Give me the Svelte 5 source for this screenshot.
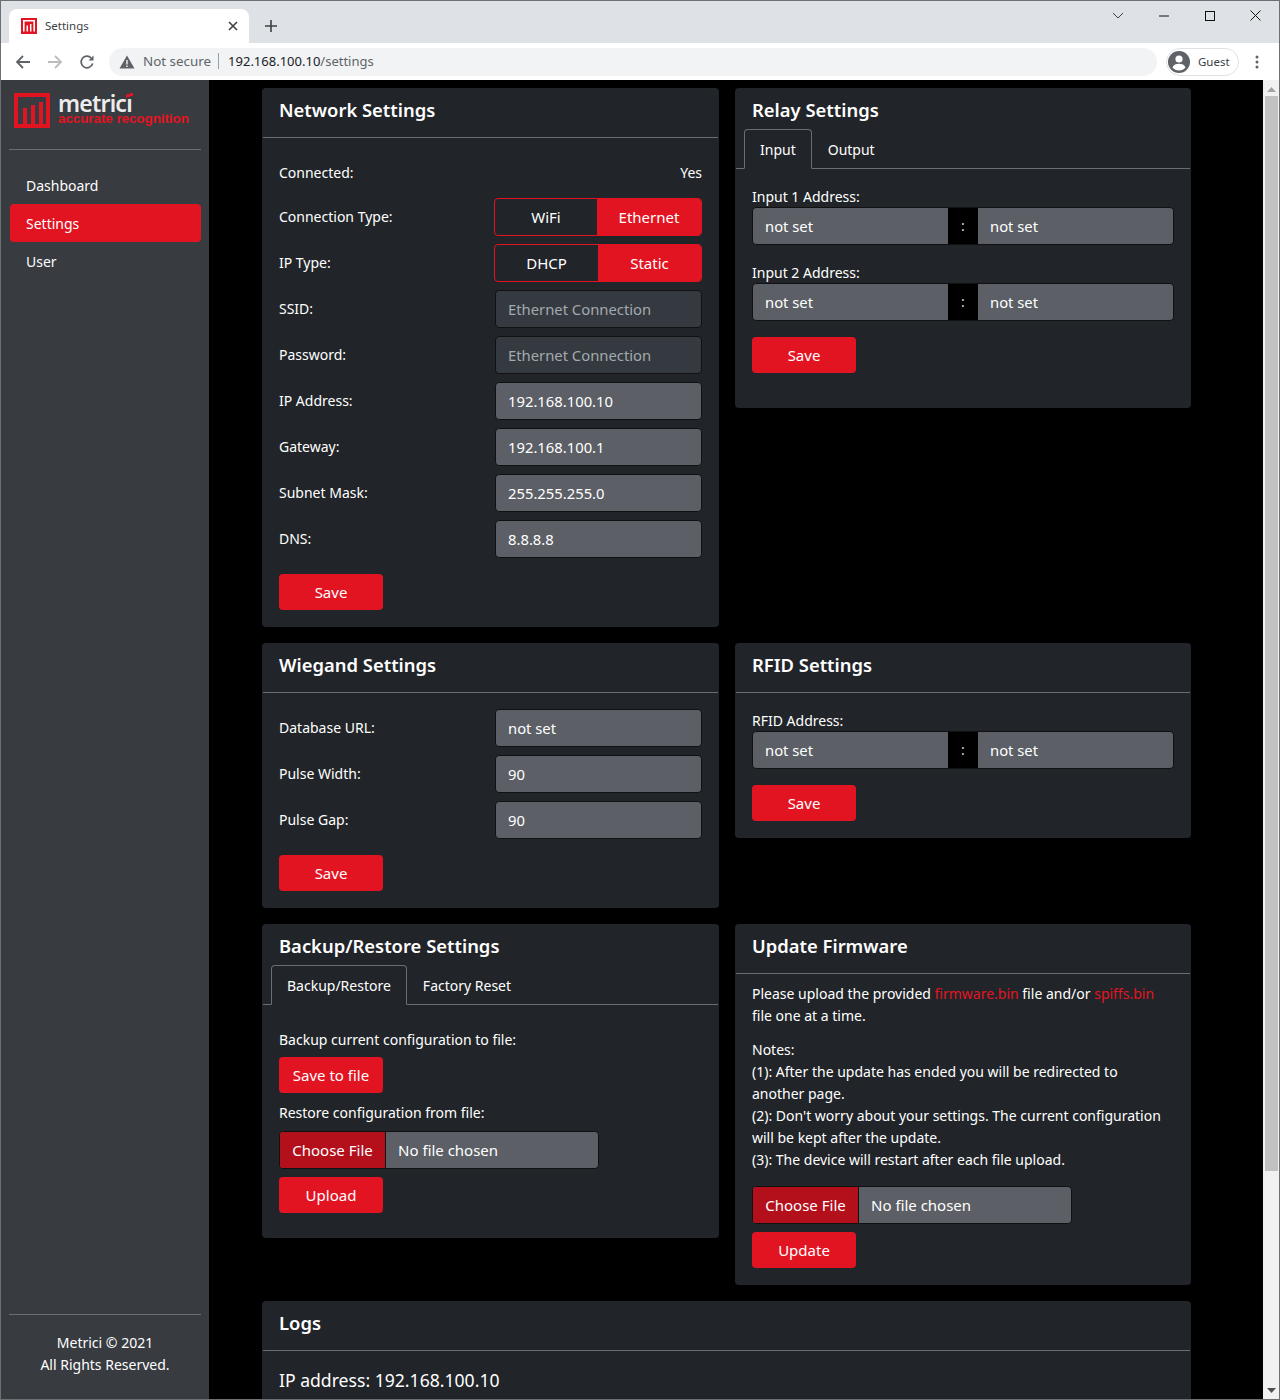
<script>
  const networkInputs = [
    { label: 'SSID:', value: 'Ethernet Connection', disabled: true },
    { label: 'Password:', value: 'Ethernet Connection', disabled: true },
    { label: 'IP Address:', value: '192.168.100.10' },
    { label: 'Gateway:', value: '192.168.100.1' },
    { label: 'Subnet Mask:', value: '255.255.255.0' },
    { label: 'DNS:', value: '8.8.8.8' }
  ];
  const wiegandInputs = [
    { label: 'Database URL:', value: 'not set' },
    { label: 'Pulse Width:', value: '90' },
    { label: 'Pulse Gap:', value: '90' }
  ];
</script>

{#snippet toggle(a, b)}
  <div class="toggle">
    <button class="tg">{a}</button>
    <button class="tg on">{b}</button>
  </div>
{/snippet}

{#snippet pair(label)}
  <div class="lbl pl">{label}</div>
  <div class="pair">
    <input class="pair-in" value="not set" />
    <span class="colon">:</span>
    <input class="pair-in" value="not set" />
  </div>
{/snippet}

{#snippet filepick()}
  <div class="file">
    <span class="file-btn">Choose File</span>
    <span class="file-name">No file chosen</span>
  </div>
{/snippet}

<div class="window">
  <header class="browser">
    <div class="tabstrip">
      <div class="btab">
        <svg class="favicon" width="16" height="16" viewBox="0 0 16 16">
          <rect width="16" height="16" fill="#e31422" />
          <path d="M2.800 13.500V2.800h10.400v10.700" fill="none" stroke="#fff" stroke-width="1.600" />
          <path d="M6.300 13.500V7.500M9.700 13.500V6" fill="none" stroke="#fff" stroke-width="1.500" />
        </svg>
        <span class="btab-title">Settings</span>
        <svg class="btab-x" width="10" height="10" viewBox="0 0 10 10"><path d="M1 1l8 8M9 1l-8 8" stroke="#3c4043" stroke-width="1.600" /></svg>
      </div>
      <svg class="newtab" width="12" height="12" viewBox="0 0 12 12"><path d="M6 0v12M0 6h12" stroke="#3c4043" stroke-width="1.600" /></svg>
      <div class="winctl">
        <svg class="w-chev" width="12" height="7" viewBox="0 0 12 7"><path d="M1 1l5 5 5-5" fill="none" stroke="#3c4043" /></svg>
        <svg class="w-min" width="10" height="2" viewBox="0 0 10 2"><path d="M0 1h10" stroke="#111" /></svg>
        <svg class="w-max" width="10" height="10" viewBox="0 0 10 10"><rect x=".5" y=".5" width="9" height="9" fill="none" stroke="#111" /></svg>
        <svg class="w-close" width="11" height="11" viewBox="0 0 11 11"><path d="M.5.5l10 10M10.500.5l-10 10" stroke="#111" /></svg>
      </div>
    </div>
    <div class="toolbar">
      <svg class="nav-ic" width="16" height="16" viewBox="0 0 16 16"><path d="M15 8H2M8 2L2 8l6 6" fill="none" stroke="#5f6368" stroke-width="1.800" /></svg>
      <svg class="nav-ic" width="16" height="16" viewBox="0 0 16 16"><path d="M1 8h13M8 2l6 6-6 6" fill="none" stroke="#babcbe" stroke-width="1.800" /></svg>
      <svg class="nav-ic" width="16" height="16" viewBox="0 0 16 16"><path d="M13.600 9.500A5.800 5.800 0 1 1 12.200 4" fill="none" stroke="#5f6368" stroke-width="1.700" /><path d="M14.500 1.500v5h-5z" fill="#5f6368" /></svg>
      <div class="omni">
        <svg width="16" height="14" viewBox="0 0 16 14"><path d="M8 .5L15.500 13.500H.5z" fill="#5f6368" /><path d="M8 5v4.500M8 10.500v1.500" stroke="#f1f3f4" stroke-width="1.400" /></svg>
        <span class="notsec">Not secure</span>
        <span class="omni-sep"></span>
        <span class="url">192.168.100.10<span class="url-path">/settings</span></span>
      </div>
      <div class="guest">
        <svg width="22" height="22" viewBox="0 0 22 22"><circle cx="11" cy="11" r="11" fill="#5f6368" /><circle cx="11" cy="8" r="3.600" fill="#fff" /><path d="M4.500 16.500c1-2.800 3.600-3.800 6.500-3.800s5.500 1 6.500 3.800c-1.500 1.800-3.900 3-6.500 3s-5-1.200-6.500-3z" fill="#fff" /></svg>
        <span>Guest</span>
      </div>
      <svg class="kebab" width="4" height="14" viewBox="0 0 4 14"><circle cx="2" cy="2" r="1.500" fill="#5f6368" /><circle cx="2" cy="7" r="1.500" fill="#5f6368" /><circle cx="2" cy="12" r="1.500" fill="#5f6368" /></svg>
    </div>
  </header>

  <div class="page">
    <aside class="sidebar">
      <div class="brand">
        <svg class="brand-mark" width="36" height="35" viewBox="0 0 36 35">
          <path d="M2 35V2h32v33" fill="none" stroke="#e31422" stroke-width="4" />
          <path d="M0 31h36v4H0zM9 31V15h4v16zM17 31V12h4v19zM25 31V9h4v22z" fill="#e31422" />
        </svg>
        <div class="brand-text">
          <div class="brand-name">metric<span class="tick">i</span></div>
          <div class="brand-tag">accurate recognition</div>
        </div>
      </div>
      <hr class="side-rule" />
      <nav class="side-nav">
        <a class="side-link" href="#d">Dashboard</a>
        <a class="side-link active" href="#s">Settings</a>
        <a class="side-link" href="#u">User</a>
      </nav>
      <div class="side-foot">
        <hr class="side-rule" />
        <p>Metrici © 2021<br />All Rights Reserved.</p>
      </div>
    </aside>

    <main class="main">
      <div class="grid">
        <section class="card">
          <div class="head"><h5>Network Settings</h5></div>
          <div class="body">
            <div class="row plain"><span>Connected:</span><span class="yes">Yes</span></div>
            <div class="row"><span class="rl">Connection Type:</span>{@render toggle('WiFi', 'Ethernet')}</div>
            <div class="row"><span class="rl">IP Type:</span><div class="alt">{@render toggle('DHCP', 'Static')}</div></div>
            {#each networkInputs as f}
              <div class="row"><span class="rl">{f.label}</span><input class="in" class:dis={f.disabled} value={f.value} /></div>
            {/each}
            <button class="btn top8">Save</button>
          </div>
        </section>

        <section class="card">
          <div class="head tabbed">
            <h5>Relay Settings</h5>
            <div class="tabs"><span class="t active">Input</span><span class="t">Output</span></div>
          </div>
          <div class="body compact">
            {@render pair('Input 1 Address:')}
            <div class="gap8"></div>
            {@render pair('Input 2 Address:')}
            <button class="btn top16">Save</button>
          </div>
        </section>

        <section class="card">
          <div class="head"><h5>Wiegand Settings</h5></div>
          <div class="body">
            {#each wiegandInputs as f}
              <div class="row"><span class="rl">{f.label}</span><input class="in" value={f.value} /></div>
            {/each}
            <button class="btn top8">Save</button>
          </div>
        </section>

        <section class="card">
          <div class="head"><h5>RFID Settings</h5></div>
          <div class="body">
            {@render pair('RFID Address:')}
            <button class="btn top16">Save</button>
          </div>
        </section>

        <section class="card">
          <div class="head tabbed">
            <h5>Backup/Restore Settings</h5>
            <div class="tabs"><span class="t active">Backup/Restore</span><span class="t">Factory Reset</span></div>
          </div>
          <div class="body backup">
            <div class="lbl first">Backup current configuration to file:</div>
            <button class="btn">Save to file</button>
            <div class="lbl restore">Restore configuration from file:</div>
            {@render filepick()}
            <button class="btn top8">Upload</button>
          </div>
        </section>

        <section class="card">
          <div class="head"><h5>Update Firmware</h5></div>
          <div class="body fw">
            <p>Please upload the provided <a href="#f">firmware.bin</a> file and/or <a href="#p">spiffs.bin</a> file one at a time.</p>
            <p>Notes:<br />(1): After the update has ended you will be redirected to another page.<br />(2): Don't worry about your settings. The current configuration will be kept after the update.<br />(3): The device will restart after each file upload.</p>
            {@render filepick()}
            <button class="btn top8">Update</button>
          </div>
        </section>

        <section class="card logs">
          <div class="head"><h5>Logs</h5></div>
          <div class="body"><div class="logline">IP address: 192.168.100.10</div></div>
        </section>
      </div>
    </main>

    <div class="scrollbar">
      <svg width="9" height="5" viewBox="0 0 9 5"><path d="M4.500 0L9 5H0z" fill="#a3a3a3" /></svg>
      <div class="thumb"></div>
      <div class="track"></div>
      <svg width="9" height="5" viewBox="0 0 9 5"><path d="M4.500 5L9 0H0z" fill="#505050" /></svg>
    </div>
  </div>
</div>

<style>
  :global(body) { margin: 0; background: #000; }
  * { box-sizing: border-box; }
  .window {
    width: 1280px; height: 1400px; overflow: hidden;
    border: 1px solid #6d7073;
    display: flex; flex-direction: column;
    font-family: "Noto Sans", "Open Sans", sans-serif;
    font-size: 14px; line-height: 22px; color: #fff;
  }
  .browser { flex: none; height: 79px; color: #3c4043; font-size: 11.500px; }
  .tabstrip { height: 42px; background: #dee1e6; display: flex; align-items: flex-end; padding-left: 8px; }
  .btab { width: 240px; height: 34px; background: #fff; border-radius: 8px 8px 0 0; display: flex; align-items: center; padding: 0 11px 0 12px; }
  .favicon { flex: none; }
  .btab-title { margin-left: 8px; flex: 1; }
  .btab-x { flex: none; }
  .newtab { margin: 0 0 11px 16px; }
  .winctl { margin-left: auto; align-self: flex-start; display: flex; align-items: center; height: 29px; }
  .w-chev { margin-right: 35px; }
  .w-min { margin-right: 36px; }
  .w-max { margin-right: 35px; }
  .w-close { margin-right: 18px; }
  .toolbar { height: 37px; background: #fff; display: flex; align-items: center; padding-left: 14px; }
  .nav-ic { flex: none; margin-right: 16px; }
  .omni { margin-left: -2px; width: 1048px; height: 28px; border-radius: 14px; background: #f1f3f4; display: flex; align-items: center; padding: 0 0 2px 10px; font-size: 13.400px; }
  .omni > svg { margin-top: 2px; }
  .notsec { margin-left: 8px; color: #5f6368; }
  .omni-sep { width: 1px; height: 16px; background: #9aa0a6; margin: 0 9px 0 7px; }
  .url { color: #202124; font-size: 13px; }
  .url-path { color: #5f6368; }
  .guest { margin-left: 9px; width: 73px; height: 28px; border: 1px solid #dee1e6; border-radius: 14px; display: flex; align-items: center; gap: 8px; padding-left: 1px; }
  .kebab { margin-left: 16px; }

  .page { flex: 1; min-height: 0; display: flex; background: #000; }
  .sidebar { flex: none; width: 208px; background: #383b40; display: flex; flex-direction: column; padding: 0 8px; }
  .brand { display: flex; height: 69px; padding: 13px 0 0 5px; gap: 8px; }
  .brand-mark { flex: none; }
  .brand-text { margin-top: 1px; }
  .brand-name { font-size: 23px; line-height: 19px; font-weight: 600; letter-spacing: -.8px; color: #ececec; height: 18px; }
  .tick { position: relative; }
  .tick::after { content: ""; position: absolute; left: 0; top: 5px; width: 7px; height: 7px; background: linear-gradient(160deg, #383b40 30%, #e31422 31%, #e31422 62%, #383b40 63%); }
  .brand-tag { font: 700 13.500px/13px "Liberation Sans", sans-serif; color: #e31422; letter-spacing: -.1px; white-space: nowrap; }
  .side-rule { margin: 0; border: 0; border-top: 1px solid #6a6d71; }
  .side-nav { margin-top: 16px; display: flex; flex-direction: column; }
  .side-link { display: block; height: 38px; line-height: 38px; padding: 1px 16px 0; color: #fff; text-decoration: none; border-radius: 4px; margin-left: 1px; }
  .side-link.active { background: #e31422; }
  .side-foot { margin-top: auto; text-align: center; padding-bottom: 23px; }
  .side-foot p { margin: 17px 0 0; }

  .main { flex: 1; min-width: 0; overflow: hidden; padding: 8px 72px 0 53px; }
  .grid { display: grid; grid-template-columns: 457px 456px; gap: 16px; align-items: start; }
  .card { background: #212529; border-radius: 4px; }
  .logs { grid-column: 1 / span 2; }
  .head { padding: 8px 16px; margin: 0 1px; border-bottom: 1px solid #6a6d71; height: 50px; }
  .head h5 { margin: 0; font-size: 18.400px; font-weight: 600; line-height: 28px; }
  .head.tabbed { height: auto; padding: 8px 0 0; border-bottom: 0; }
  .head.tabbed h5 { padding: 0 16px; height: 33px; }
  .tabs { display: flex; padding-left: 8px; border-bottom: 1px solid #6a6d71; height: 40px; }
  .t { height: 40px; padding: 9px 15px 0; border: 1px solid transparent; border-radius: 4px 4px 0 0; line-height: 22px; }
  .t.active { border-color: #6a6d71 #6a6d71 #212529; }
  .body { padding: 16px 17px 17px; display: flex; flex-direction: column; align-items: flex-start; }
  .row { width: 100%; display: flex; justify-content: space-between; align-items: flex-start; min-height: 38px; margin-bottom: 8px; }
  .row.plain { min-height: 36px; padding-top: 8px; }
  .rl { padding-top: 8px; }
  .toggle { width: 208px; height: 38px; display: flex; border: 1px solid #e31422; border-radius: 4px; overflow: hidden; font-size: 15px; }
  .tg { flex: 1; background: none; border: 0; color: #fff; font: inherit; padding: 0; }
  .tg:first-child { flex: none; width: 102px; }
  .alt .tg:first-child { width: 103px; }
  .tg.on { background: #e31422; }
  .in { width: 207px; height: 38px; border: 1px solid #111; border-radius: 4px; background: #5c6066; color: #fff; padding: 0 12px; font: 14.800px "Noto Sans", sans-serif; }
  .in.dis { background: #343a40; color: #a4a9ae; }
  .btn { width: 104px; height: 36px; border: 0; border-radius: 4px; background: #e31422; color: #fff; font: 15px "Noto Sans", sans-serif; padding: 0; }
  .top8 { margin-top: 8px; }
  .top16 { margin-top: 16px; }
  .lbl { height: 22px; }
  .lbl.pl { padding-top: 1px; }
  .pair { height: 38px; display: grid; grid-template-columns: 195px 30px 1fr; border: 1px solid #111; border-radius: 4px; overflow: hidden; background: #5c6066; align-self: stretch; }
  .pair-in { min-width: 0; width: 100%; background: none; border: 0; color: #fff; padding: 0 12px; font: 14.800px "Noto Sans", sans-serif; }
  .colon { background: #000; color: #ddd; text-align: center; line-height: 36px; }
  .gap8 { height: 16px; }
  .body.compact { padding-bottom: 35px; }
  .file { width: 320px; height: 38px; display: flex; border: 1px solid #111; border-radius: 4px; overflow: hidden; background: #5c6066; }
  .file-btn { width: 106px; background: #b3101c; border-right: 1px solid #111; text-align: center; line-height: 36px; font-size: 15px; }
  .file-name { padding-left: 12px; line-height: 36px; font-size: 15px; }
  .body.backup { padding-top: 24px; padding-bottom: 25px; }
  .lbl.restore { margin-top: 9px; margin-bottom: 7px; }
  .lbl.first { margin-bottom: 6px; }
  .body.fw { padding-top: 9px; }
  .fw p { margin: 0 0 12px; max-width: 414px; }
  .fw a { color: #e31422; text-decoration: none; }
  .fw .file { margin-top: 3px; }
  .logline { font-size: 17.600px; line-height: 26px; }

  .scrollbar { flex: none; width: 16px; background: #f1f1f1; display: flex; flex-direction: column; align-items: center; padding: 7px 0 6px; }
  .thumb { width: 13px; height: 1075px; background: #c1c1c1; margin-top: 4px; flex: none; }
  .track { flex: 1; }
</style>
